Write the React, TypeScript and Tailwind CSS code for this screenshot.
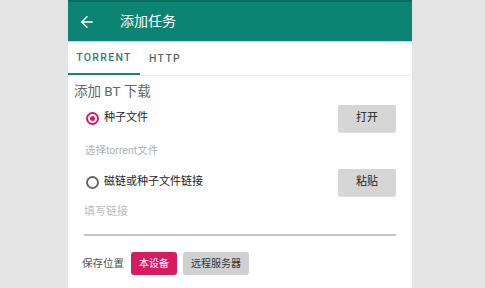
import { ArrowLeft } from "lucide-react";

const FONT = { fontFamily: 'Roboto, "Noto Sans CJK SC", sans-serif' };

function Radio({ checked }: { checked: boolean }) {
  return (
    <span
      className={`flex h-[13px] w-[13px] items-center justify-center rounded-full border-2 ${
        checked ? "border-[#d81b60]" : "border-[#666]"
      }`}
    >
      {checked && <span className="h-[5px] w-[5px] rounded-full bg-[#d81b60]" />}
    </span>
  );
}

export default function App() {
  return (
    <div className="flex h-[288px] w-[485px] bg-[#e4e4e4]" style={FONT}>
      <div className="ml-[68px] flex w-[344px] flex-col bg-white">
        <div className="h-[2px] bg-[#0a6b5f]" />
        <div className="flex h-[39px] items-center bg-[#0b8474] text-white">
          <ArrowLeft size={18} strokeWidth={2} className="ml-[10px]" />
          <span className="ml-[24px] text-[14px]">添加任务</span>
        </div>
        <div className="h-px bg-[#b9e3de]" />

        <div className="flex h-[34px] border-b border-[#eee]">
          <div className="flex w-[72px] flex-col">
            <span className="flex flex-1 items-center justify-center text-[10.5px] font-medium tracking-[1.3px] text-[#2b7f75]">
              TORRENT
            </span>
            <span className="h-[2px] bg-[#1d8073]" />
          </div>
          <span className="ml-[9px] flex items-center text-[10.5px] font-medium tracking-[1.3px] text-[#666]">
            HTTP
          </span>
        </div>

        <div className="flex flex-col px-[6px]">
          <span className="mt-[6px] text-[13.5px] leading-[18px] text-[#666]">添加 BT 下载</span>

          <div className="mt-[5px] flex h-[27px] items-center">
            <span className="ml-[12px]"><Radio checked /></span>
            <span className="ml-[5px] text-[11px] text-[#222]">种子文件</span>
            <button className="ml-auto mr-[10px] h-[27px] w-[58px] rounded-[2px] bg-[#d6d6d6] text-[11px] text-[#222] shadow-[0_1px_1px_rgba(0,0,0,0.15)]">
              打开
            </button>
          </div>
          <span className="ml-[11px] mt-[12px] text-[10.5px] leading-[14px] text-[#b0b0b0]">选择torrent文件</span>

          <div className="mt-[11px] flex h-[27px] items-center">
            <span className="ml-[12px]"><Radio checked={false} /></span>
            <span className="ml-[5px] text-[11px] text-[#222]">磁链或种子文件链接</span>
            <button className="ml-auto mr-[10px] h-[27px] w-[58px] rounded-[2px] bg-[#d6d6d6] text-[11px] text-[#222] shadow-[0_1px_1px_rgba(0,0,0,0.15)]">
              粘贴
            </button>
          </div>

          <span className="ml-[10px] mt-[9px] text-[11px] leading-[14px] text-[#bdbdbd]">填写链接</span>
          <div className="ml-[10px] mr-[10px] mt-[15px] h-[2px] bg-[#c4c4c4]" />

          <div className="mt-[16px] flex items-center">
            <span className="ml-[8px] text-[10.5px] text-[#555]">保存位置</span>
            <button className="ml-[7px] h-[23px] rounded-[3px] bg-[#d81b60] px-[8px] text-[10px] text-white">
              本设备
            </button>
            <button className="ml-[6px] h-[23px] rounded-[3px] bg-[#d0d0d0] px-[8px] text-[10px] text-[#333]">
              远程服务器
            </button>
          </div>
        </div>
      </div>
    </div>
  );
}
